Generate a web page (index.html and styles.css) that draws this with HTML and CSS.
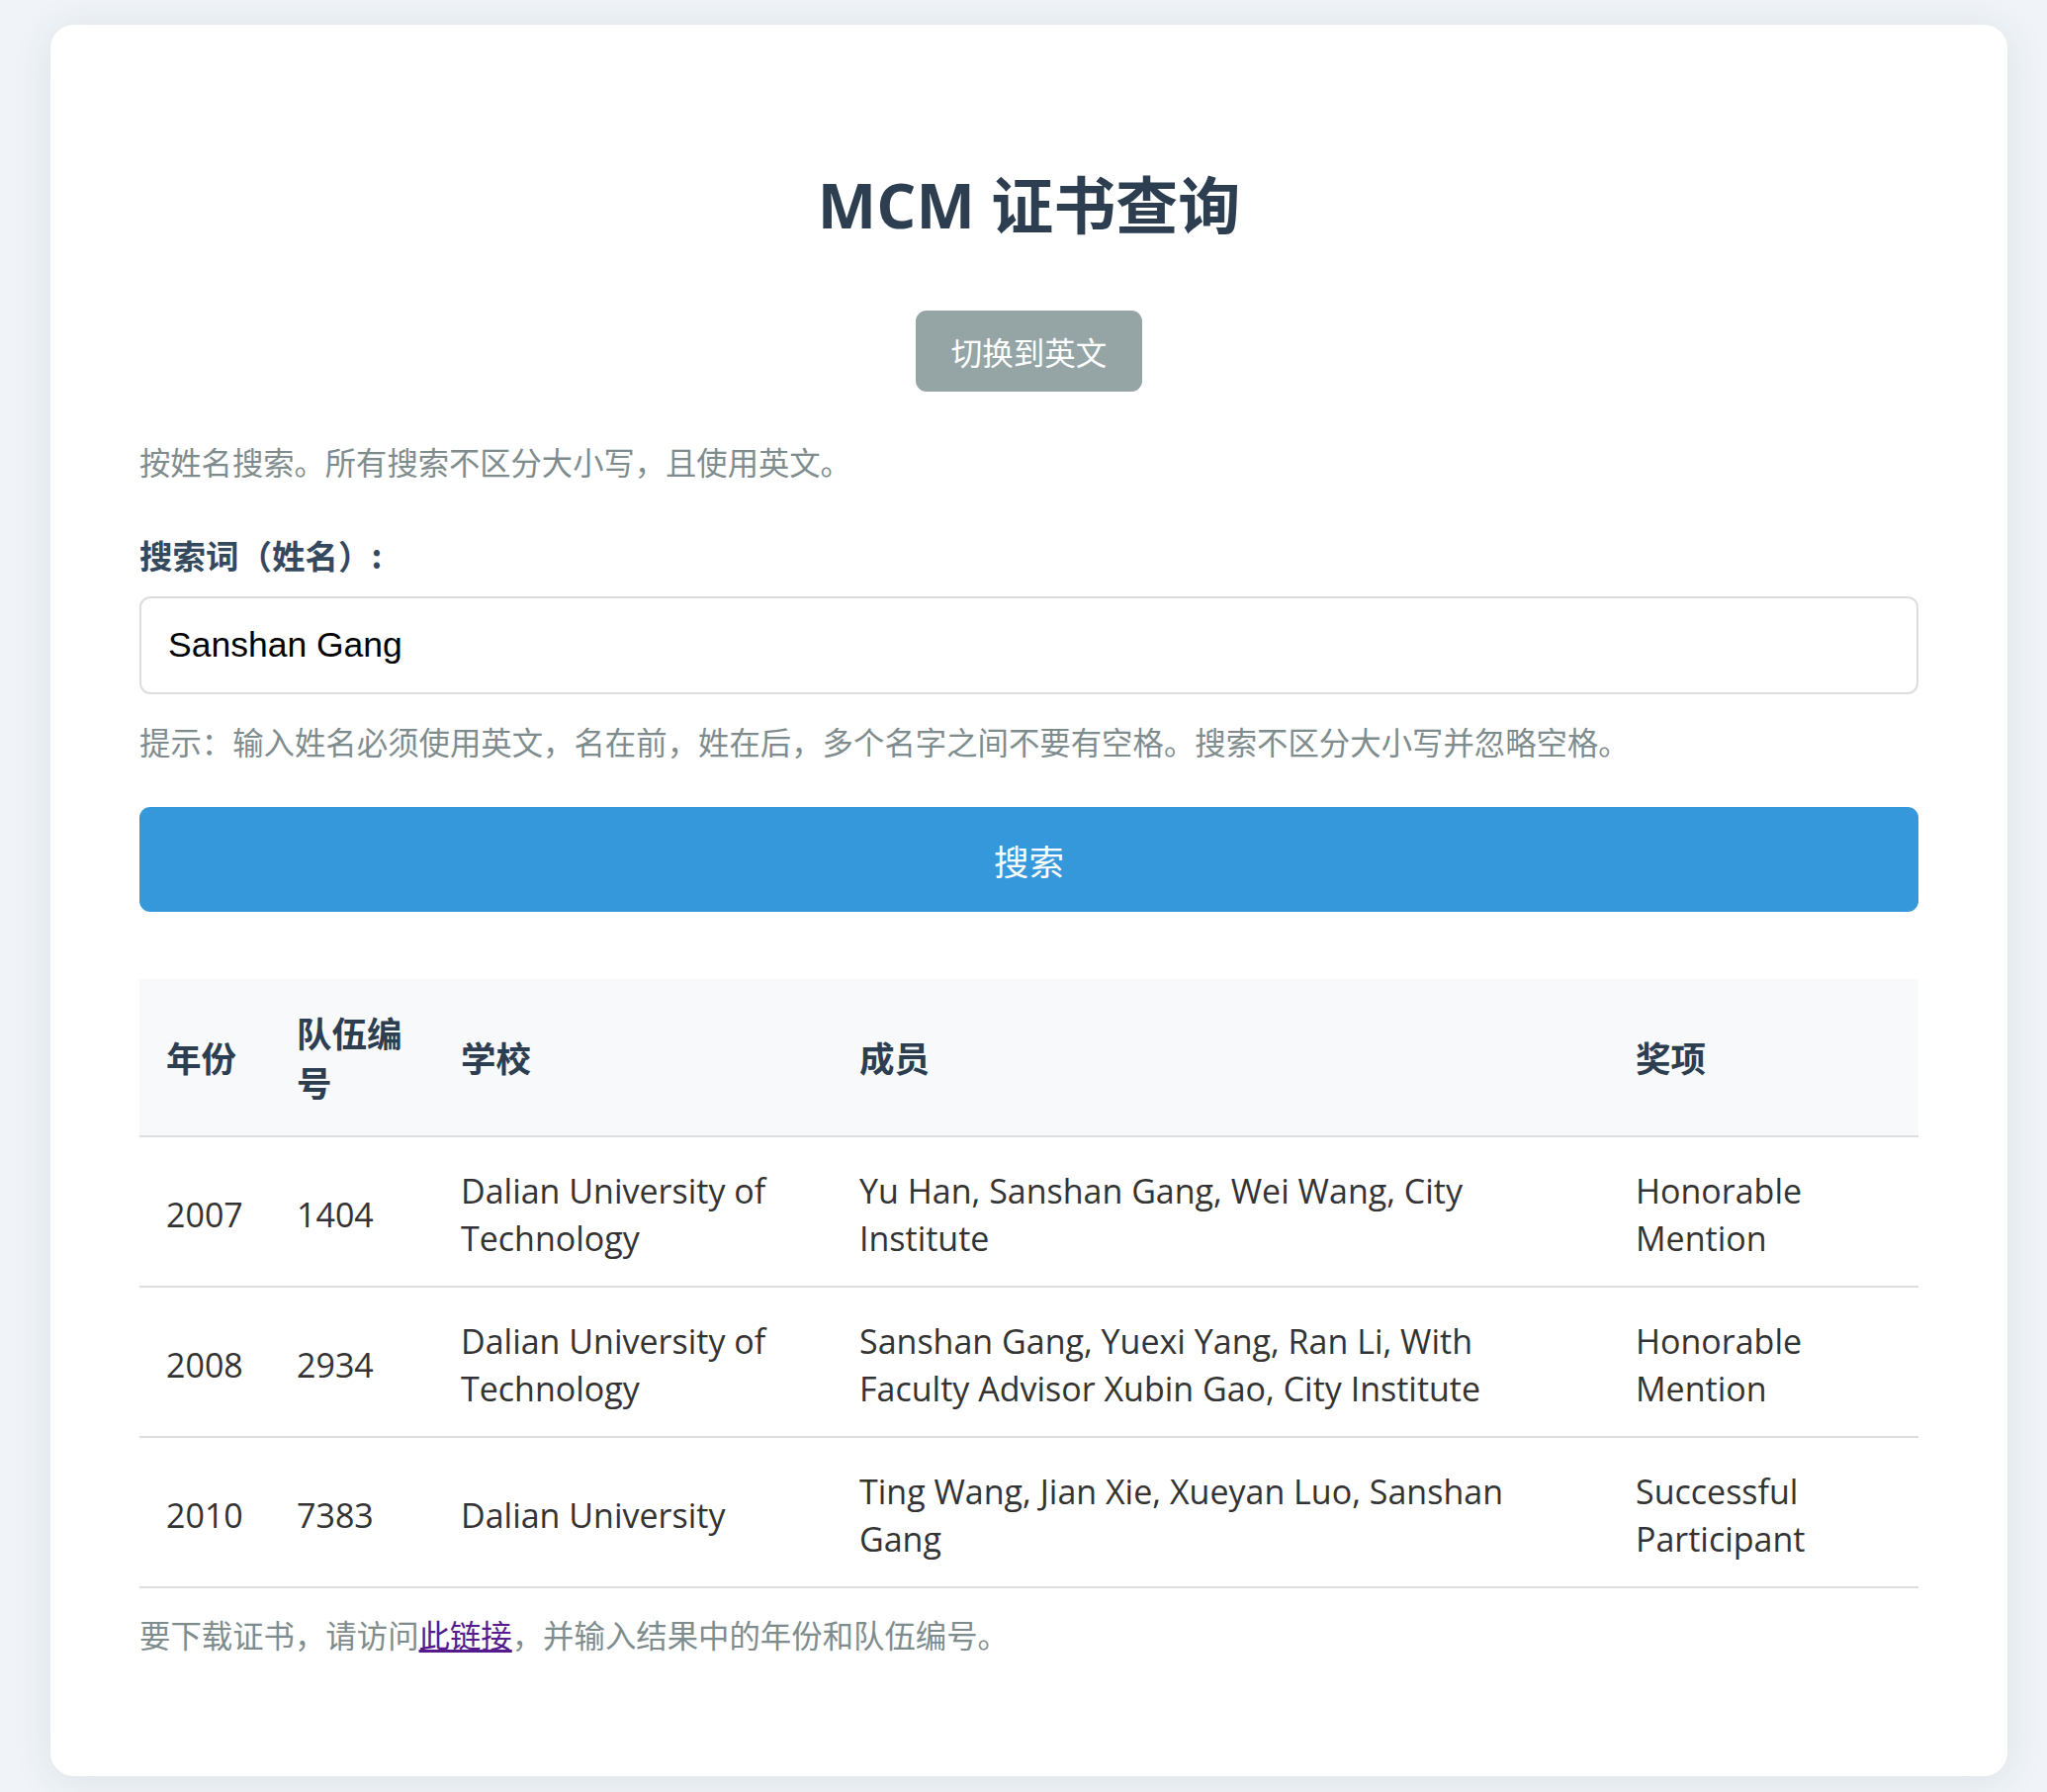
FILE: index.html
```html
<!DOCTYPE html>
<html lang="zh-CN">
<head>
<meta charset="utf-8">
<title>MCM 证书查询</title>
<link rel="stylesheet" href="styles.css">
</head>
<body>
<div class="card">
  <h1 class="title">MCM 证书查询</h1>
  <div class="lang-row"><button class="lang-btn">切换到英文</button></div>
  <p class="desc">按姓名搜索。所有搜索不区分大小写，且使用英文。</p>
  <label class="label">搜索词（姓名）:</label>
  <div class="input-box">Sanshan Gang</div>
  <p class="hint">提示：输入姓名必须使用英文，名在前，姓在后，多个名字之间不要有空格。搜索不区分大小写并忽略空格。</p>
  <button class="search-btn">搜索</button>
  <table class="results">
    <colgroup>
      <col class="c1"><col class="c2"><col class="c3"><col class="c4"><col class="c5">
    </colgroup>
    <thead>
      <tr><th>年份</th><th>队伍编号</th><th>学校</th><th>成员</th><th>奖项</th></tr>
    </thead>
    <tbody>
      <tr><td>2007</td><td>1404</td><td>Dalian University of Technology</td><td>Yu Han, Sanshan Gang, Wei Wang, City Institute</td><td>Honorable Mention</td></tr>
      <tr><td>2008</td><td>2934</td><td>Dalian University of Technology</td><td>Sanshan Gang, Yuexi Yang, Ran Li, With Faculty Advisor Xubin Gao, City Institute</td><td>Honorable Mention</td></tr>
      <tr><td>2010</td><td>7383</td><td>Dalian University</td><td>Ting Wang, Jian Xie, Xueyan Luo, Sanshan Gang</td><td>Successful Participant</td></tr>
    </tbody>
  </table>
  <p class="footer">要下载证书，请访问<a href="#" class="link">此链接</a>，并输入结果中的年份和队伍编号。</p>
</div>
</body>
</html>
```

FILE: styles.css
```css
html, body {
  margin: 0;
  padding: 0;
}
body {
  background: #f0f4f8;
  font-family: "Open Sans", "Noto Sans CJK SC", sans-serif;
  font-size: 29.6px;
  line-height: 1.6;
  color: #333;
  padding: 25px 40px 16px 51px;
}
.card {
  width: 1979px;
  box-sizing: border-box;
  height: 1771px;
  background: #fff;
  border-radius: 24px;
  box-shadow: 0 4px 40px rgba(40, 60, 90, 0.10);
  padding: 146px 90px 90px;
}
.title {
  margin: 0 0 71px;
  font-size: 63px;
  line-height: 72px;
  font-weight: 700;
  text-align: center;
  color: #2c3e50;
  font-family: "Open Sans", "Noto Sans CJK SC", sans-serif;
}
.lang-row {
  text-align: center;
  height: 82px;
}
.lang-btn {
  width: 229px;
  height: 82px;
  border: none;
  border-radius: 11px;
  background: #95a5a6;
  color: #fff;
  font-family: "Noto Sans CJK SC", sans-serif;
  font-size: 31.5px;
  padding: 0;
}
.desc {
  margin: 47px 0 0;
  color: #7f8c8d;
  font-family: "Noto Sans CJK SC", sans-serif;
  font-size: 31.3px;
  line-height: 47px;
}
.label {
  display: block;
  margin: 47px 0 0;
  font-weight: 700;
  color: #34495e;
  font-family: "Noto Sans CJK SC", sans-serif;
  font-size: 33.5px;
  line-height: 47px;
}
.input-box {
  margin-top: 19px;
  height: 99px;
  box-sizing: border-box;
  border: 2px solid #ddd;
  border-radius: 11px;
  padding: 0 27px;
  display: flex;
  align-items: center;
  font-family: "Liberation Sans", Arial, sans-serif;
  font-size: 35.5px;
  color: #000;
}
.hint {
  margin: 24px 0 0;
  color: #7f8c8d;
  font-family: "Noto Sans CJK SC", sans-serif;
  font-size: 31.4px;
  line-height: 47px;
}
.search-btn {
  display: block;
  width: 100%;
  margin-top: 43px;
  height: 106px;
  border: none;
  border-radius: 11px;
  background: #3498db;
  color: #fff;
  font-family: "Noto Sans CJK SC", sans-serif;
  font-size: 35.5px;
  padding: 0;
}
.results {
  width: 100%;
  margin-top: 68px;
  border-collapse: collapse;
  table-layout: fixed;
}
.c1 { width: 132px; }
.c2 { width: 166px; }
.c3 { width: 403px; }
.c4 { width: 785px; }
.c5 { width: auto; }
.results th {
  background: #f8f9fa;
  color: #2c3e50;
  font-weight: 700;
  text-align: left;
  font-family: "Noto Sans CJK SC", sans-serif;
  font-size: 35.5px;
  padding: 29px 27px;
  line-height: 50px;
  border-bottom: 2px solid #ddd;
  vertical-align: middle;
}
.results td {
  padding: 31px 27px 24px;
  font-size: 34px;
  line-height: 47.5px;
  border-bottom: 2px solid #ddd;
  vertical-align: middle;
  color: #333;
}
.footer {
  margin: 23px 0 0;
  color: #7f8c8d;
  font-family: "Noto Sans CJK SC", sans-serif;
  font-size: 31.4px;
  line-height: 47px;
}
.link {
  color: #551a8b;
  text-decoration: underline;
}
```
